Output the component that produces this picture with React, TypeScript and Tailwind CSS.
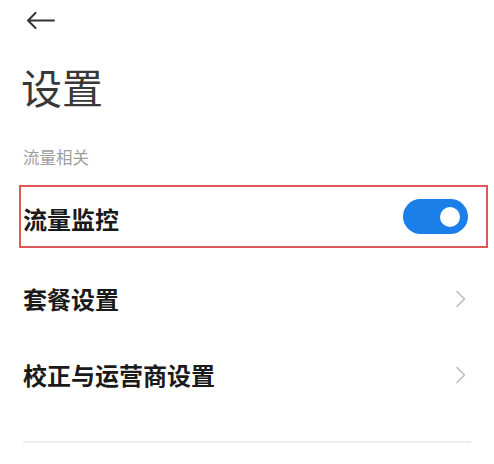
import React from "react";

const font = { fontFamily: '"Noto Sans CJK SC", "Noto Sans", sans-serif' };

function Chevron() {
  return (
    <svg width="12" height="18" viewBox="0 0 12 18" fill="none">
      <path d="M2 1.5 L9.5 9 L2 16.5" stroke="#bdbdbd" strokeWidth="1.6" strokeLinecap="round" strokeLinejoin="round" />
    </svg>
  );
}

export default function App() {
  return (
    <div className="w-[494px] h-[464px] bg-white overflow-hidden" style={font}>
      <div className="h-[40px] flex items-center pl-[26px] pt-[1px]">
        <svg width="29" height="17" viewBox="0 0 29 17" fill="none">
          <path d="M28 8.5 H2 M9.5 1 L2 8.5 L9.5 16" stroke="#333333" strokeWidth="2" strokeLinecap="round" strokeLinejoin="round" />
        </svg>
      </div>
      <div className="mt-[26px] pl-[21px] text-[41px] leading-[41px] text-[#383838] font-normal">设置</div>
      <div className="mt-[40px] pl-[23px] text-[16.5px] leading-[20px] text-[#9e9e9e]">流量相关</div>
      <div className="mt-[18px] ml-[19px] mr-[6px] h-[63px] border-2 border-[#de5a56] flex items-center justify-between pl-[2px] pr-[18px]">
        <span className="text-[24px] leading-[30px] font-bold text-[#1a1a1a] pt-[4px]">流量监控</span>
        <div className="w-[65px] h-[35px] rounded-full bg-[#1a7fe8] flex items-center justify-end pr-[8px]">
          <div className="w-[20px] h-[20px] rounded-full bg-white" />
        </div>
      </div>
      <div className="h-[77px] mt-[12px] flex items-center justify-between pl-[23px] pr-[27px]">
        <span className="text-[24px] leading-[30px] font-bold text-[#1a1a1a]">套餐设置</span>
        <Chevron />
      </div>
      <div className="h-[75px] flex items-center justify-between pl-[23px] pr-[27px]">
        <span className="text-[24px] leading-[30px] font-bold text-[#1a1a1a]">校正与运营商设置</span>
        <Chevron />
      </div>
      <div className="mt-[29px] mx-[23px] h-[2px] bg-[#eeeeee]" />
    </div>
  );
}
